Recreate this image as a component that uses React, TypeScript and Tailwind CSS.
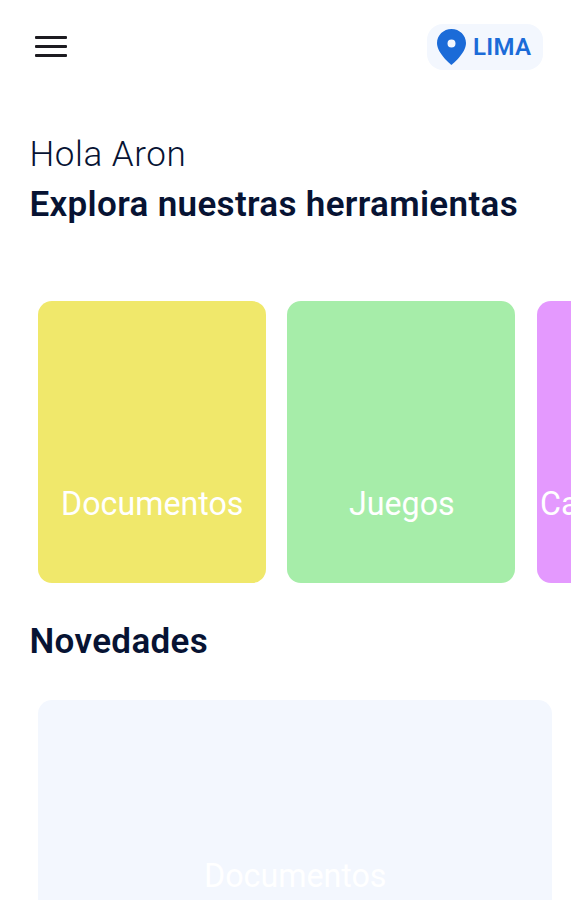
const tools = [
  { name: "Documentos", style: "justify-center bg-[#f0e86b]", label: "origin-center" },
  { name: "Juegos", style: "justify-center bg-[#a6eda9]", label: "origin-center" },
  { name: "Calculadora", style: "justify-start pl-[3px] bg-[#e499fe]", label: "origin-left" },
];

function Header() {
  return (
    <header className="flex h-[46px] items-center justify-between pl-[35px] pr-[28px]">
      <button aria-label="Menu" className="mb-[1px] flex w-[32px] flex-col gap-[6px]">
        <span className="h-[3px] w-full rounded-[1px] bg-[#1c1b20]" />
        <span className="h-[3px] w-full rounded-[1px] bg-[#1c1b20]" />
        <span className="h-[3px] w-full rounded-[1px] bg-[#1c1b20]" />
      </button>
      <div className="flex h-[46px] w-[116px] items-center rounded-[16px] bg-[#f3f7fe] pl-[10px] text-[#1b6bd8]">
        <svg className="h-[36px] w-[29px] shrink-0" viewBox="0 0 29 36" fill="currentColor">
          <path fillRule="evenodd" d="M14.5 0C6.5 0 0 6.2 0 14.1C0 24.7 14.5 36 14.5 36S29 24.7 29 14.1C29 6.2 22.5 0 14.5 0ZM14.5 10.4a4 4 0 1 1 0 8a4 4 0 1 1 0-8Z" />
        </svg>
        <span className="ml-[7px] text-[24px] font-semibold leading-none tracking-[0.3px]">LIMA</span>
      </div>
    </header>
  );
}

export default function App() {
  return (
    <main className="h-[900px] w-full overflow-hidden bg-white pt-[24px] font-[Roboto,sans-serif] text-[#071333]">
      <Header />
      <section className="mt-[60px] pl-[29.5px]">
        <p className="text-[35px] font-light leading-[50px] tracking-[0.55px]">Hola Aron</p>
        <h1 className="whitespace-nowrap text-[35px] font-semibold leading-[50px] tracking-[0.33px]">Explora nuestras herramientas</h1>
      </section>
      <section className="mt-[71px] flex gap-[21.3px] overflow-hidden pl-[38px]">
        {tools.map((tool) => (
          <article key={tool.name} className={`flex h-[282px] w-[228px] shrink-0 items-end rounded-[14px] pb-[60px] text-white ${tool.style}`}>
            <span className={`scale-x-[0.947] text-[34px] leading-[40px] ${tool.label}`}>{tool.name}</span>
          </article>
        ))}
      </section>
      <h2 className="mt-[34px] pl-[29.5px] text-[35px] font-semibold leading-[50px] tracking-[0.35px]">Novedades</h2>
      <article className="ml-[38px] mt-[33px] flex h-[282px] w-[514px] justify-center rounded-[14px] bg-[#f3f7fe] pt-[155px] text-white">
        <span className="scale-x-[0.947] text-[34px] leading-[40px]">Documentos</span>
      </article>
    </main>
  );
}
